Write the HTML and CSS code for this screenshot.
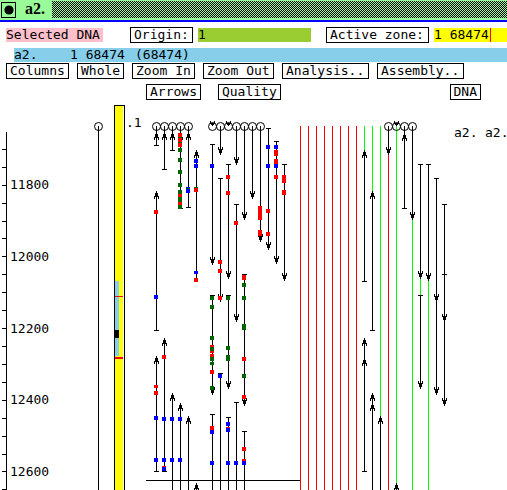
FILE: index.html
```html
<!DOCTYPE html>
<html lang="en">
<head>
<meta charset="utf-8">
<title>a2.</title>
<link rel="stylesheet" href="styles.css">
</head>
<body>
<header class="titlebar">
  <button class="window-menu" aria-label="Window menu"><svg width="14" height="14" viewBox="0 0 14 14"><circle cx="7" cy="7" r="4.6"/></svg></button>
  <h1>a2.</h1>
  <div class="stipple"></div>
</header>
<main>
  <div class="row fields">
    <span class="selected">Selected DNA</span>
    <label class="box" for="origin">Origin:</label>
    <input class="origin" id="origin" value="1">
    <label class="box zone-label" for="zone">Active zone:</label>
    <div class="zone"><input id="zone" value="1 68474"><span class="caret"></span></div>
  </div>
  <div class="summary"><span class="name">a2.</span><span class="range">1 68474</span><span>(68474)</span></div>
  <nav class="menu">
    <button class="box">Columns</button>
    <button class="box">Whole</button>
    <button class="box">Zoom In</button>
    <button class="box">Zoom Out</button>
    <button class="box">Analysis..</button>
    <button class="box">Assembly..</button>
  </nav>
  <div class="headings">
    <button class="box">Arrows</button>
    <button class="box">Quality</button>
    <button class="box dna">DNA</button>
  </div>
  <svg class="map" id="map" width="507" height="387" viewBox="0 103 507 387" role="img" aria-label="Sequence map"></svg>
</main>
<script src="map.js"></script>
</body>
</html>
```
FILE: styles.css
```css
* { box-sizing: border-box; }

body {
  margin: 0;
  background: #fff;
  color: #000;
  font: 13px/14px "DejaVu Sans Mono", monospace;
  overflow: hidden;
}

button, input { font: inherit; color: inherit; }

.titlebar {
  display: flex;
  height: 22px;
  padding: 1px 0;
  background: #98fb98;
  border-bottom: 2px solid #00f;
}

.window-menu {
  display: grid;
  place-items: center;
  width: 15px;
  height: 16px;
  margin: 1px 9px 0 1px;
  padding: 0;
  border: 1px solid #000;
  background: #98fb98;
}

.window-menu svg { display: block; }

h1 {
  width: 27px;
  margin: 0;
  font: bold 16px/16px "Liberation Serif", serif;
}

.stipple {
  flex: 1;
  height: 17px;
  background: repeating-conic-gradient(#98fb98 0 25%, #000 0 50%) 0 0 / 2px 2px;
}

.row { display: flex; align-items: center; }

.fields { height: 26px; padding: 0 0 0 6px; }

.box {
  height: 16px;
  padding: 0 3px;
  border: 1px solid #000;
  background: #fff;
  line-height: 14px;
  text-align: left;
  white-space: nowrap;
}

.selected { width: 97px; margin-right: 27px; background: #ffc0cb; }

.fields .box { width: 63px; margin-right: 5px; }

.origin {
  width: 113px;
  height: 14px;
  margin-right: 15px;
  padding: 0;
  border: 0;
  background: #9acd32;
}

.fields .zone-label { width: 103px; }

.zone { display: flex; flex: 1; height: 14px; background: #ff0; }

.zone input {
  width: 56px;
  height: 14px;
  padding: 0;
  border: 0;
  background: transparent;
}

.caret { width: 1px; background: #f00; }

.summary {
  display: flex;
  margin-left: 14px;
  background: #87ceeb;
}

.name { width: 56px; }

.range { width: 65px; }

.menu {
  display: grid;
  grid-template-columns: 63px 47px 63px 71px 87px 87px;
  gap: 8px;
  padding: 1px 0 0 6px;
}

.headings {
  display: flex;
  gap: 17px;
  padding: 5px 26px 3px 146px;
}

.dna { margin-left: auto; }

.map { display: block; shape-rendering: crispEdges; }

.map circle { shape-rendering: geometricPrecision; }

.map text { font-size: 13px; }
```
FILE: map.js
```js
const svg = document.getElementById('map');
const BOTTOM = 490;
const RED = '#f00', GREEN = '#0f0', BLUE = '#00f', DARK = '#006400';

function add(tag, attrs, text) {
  const el = document.createElementNS('http://www.w3.org/2000/svg', tag);
  for (const key in attrs) el.setAttribute(key, attrs[key]);
  if (text) el.textContent = text;
  svg.append(el);
}
const rect = (x, y, width, height, fill = '#000') => add('rect', { x, y, width, height, fill });
const line = (x, y1, y2, fill) => rect(x, y1, 1, y2 - y1, fill);
const bar = (x, y) => rect(x - 2, y, 5, 1);
const ring = x => add('circle', { cx: x + 0.5, cy: 126.5, r: 4, fill: 'none', stroke: '#000' });
function up(x, y) {
  rect(x, y, 1, 8);
  rect(x - 1, y + 2, 3, 4);
  rect(x - 2, y + 5, 1, 3);
  rect(x + 2, y + 5, 1, 3);
}
function down(x, y) {
  rect(x, y - 7, 1, 8);
  rect(x - 1, y - 5, 3, 4);
  rect(x - 2, y - 7, 1, 3);
  rect(x + 2, y - 7, 1, 3);
}
function clipped(x) {
  ring(x);
  rect(x, 123, 1, 3);
  rect(x - 1, 123, 1, 2);
  rect(x + 1, 123, 1, 2);
  rect(x - 2, 121, 1, 3);
  rect(x + 2, 121, 1, 3);
}

// scale
line(6, 132, BOTTOM);
[149, 167, 185, 203, 221, 238, 256, 274, 292, 310, 328, 346, 364, 382, 400, 418, 436, 454, 471, 489]
  .forEach(y => rect(2, y, 4, 1));
[[11800, 189], [12000, 261], [12200, 333], [12400, 404], [12600, 476]]
  .forEach(([n, y]) => add('text', { x: 10, y }, String(n)));

// locator
line(98, 126, BOTTOM);
ring(98);
rect(114, 105, 11, 385);
rect(115, 106, 9, 384, '#fff');
rect(115, 106, 8, 384, '#ff0');
rect(115, 281, 4, 75, '#87ceeb');
rect(115, 330, 4, 8);
rect(115, 296, 8, 1, RED);
rect(115, 357, 8, 2, RED);
add('text', { x: 126, y: 127 }, '.1');
add('text', { x: 454, y: 137 }, 'a2.');
add('text', { x: 485, y: 137 }, 'a2.');

// coloured columns
for (let x = 300; x <= 356; x += 8) line(x, 126, BOTTOM, RED);
[[364, 126, 150], [372, 126, 191], [380, 126, 416], [396, 126, 483], [412, 219, BOTTOM], [420, 278, 295], [428, 280, BOTTOM]]
  .forEach(([x, a, b]) => line(x, a, b, GREEN));
line(388, 154, BOTTOM, RED);

[156, 164, 172, 180, 188, 220, 236, 244, 252, 260, 388, 404, 412].forEach(ring);
[212, 228, 396].forEach(clipped);

// matches pointing up: x, tip, end, closing bar
[
  [156, 132, 145, 1], [156, 191, 330, 1], [156, 356, 471, 1],
  [164, 132, 169, 1], [164, 338, 471, 1],
  [172, 132, 150, 1], [172, 393, BOTTOM, 0],
  [180, 132, 208, 1], [180, 403, BOTTOM, 0],
  [188, 132, 207, 1], [188, 416, BOTTOM, 0],
  [196, 150, 281, 0], [196, 483, BOTTOM, 0],
  [364, 150, 281, 1], [364, 338, 471, 1], [364, 358, 471, 1],
  [372, 191, 330, 1], [372, 393, BOTTOM, 0], [372, 403, BOTTOM, 0],
  [380, 416, BOTTOM, 0], [396, 483, BOTTOM, 0], [404, 133, 208, 1]
].forEach(([x, tip, end, closed]) => {
  line(x, tip, end);
  up(x, tip);
  if (closed) bar(x, end);
});
[156, 164, 172, 180, 188, 404].forEach(x => line(x, 126, 134));

// matches pointing down: x, start, tip (a start of 126 comes out of a ring)
[
  [212, 144, 264], [212, 295, 394], [220, 126, 154], [220, 178, 301],
  [228, 164, 278], [228, 295, 388], [236, 126, 164], [236, 204, 321],
  [244, 126, 219], [244, 274, 405], [252, 126, 198], [260, 126, 241],
  [268, 128, 249], [276, 141, 263], [284, 164, 280],
  [388, 126, 154], [412, 126, 219], [420, 164, 278], [420, 295, 388],
  [428, 164, 280], [436, 178, 301], [436, 294, 394], [444, 204, 321], [444, 274, 405]
].forEach(([x, start, tip]) => {
  line(x, start, tip);
  down(x, tip);
  if (start > 126 && !(x === 436 && start === 294)) bar(x, start);
});

// matches running off the bottom
[[212, 414], [220, 373], [228, 417], [236, 402], [244, 431]].forEach(([x, y]) => {
  line(x, y, BOTTOM);
  bar(x, y);
});

// markers: x, top, height, colour
[
  [156, 210, 4, RED], [156, 295, 4, BLUE], [156, 385, 3, RED], [156, 391, 4, RED],
  [156, 416, 4, BLUE], [156, 458, 4, BLUE],
  [164, 355, 4, RED], [164, 417, 4, BLUE], [164, 458, 4, BLUE], [164, 466, 2, RED], [164, 467, 4, BLUE],
  [172, 417, 4, BLUE], [172, 458, 4, BLUE], [180, 417, 4, BLUE], [180, 458, 4, BLUE],
  [180, 133, 4, RED], [180, 137, 1, DARK], [180, 138, 4, RED], [180, 142, 1, DARK], [180, 143, 4, RED],
  [180, 148, 4, DARK], [180, 158, 4, DARK], [180, 170, 4, DARK], [180, 183, 4, DARK], [180, 190, 4, DARK],
  [180, 194, 3, RED], [180, 197, 5, DARK], [180, 202, 3, RED], [180, 205, 4, DARK],
  [188, 187, 2, BLUE], [188, 188, 1, DARK], [188, 189, 4, BLUE],
  [196, 159, 4, BLUE], [196, 164, 4, BLUE], [196, 187, 1, DARK], [196, 188, 4, RED],
  [196, 271, 3, BLUE], [196, 278, 4, RED],
  [212, 164, 4, BLUE], [212, 296, 4, DARK], [212, 305, 4, DARK], [212, 336, 4, DARK],
  [212, 345, 2, RED], [212, 347, 4, DARK], [212, 351, 2, RED], [212, 354, 3, RED], [212, 357, 4, DARK],
  [212, 362, 3, DARK], [212, 370, 4, RED], [212, 386, 4, DARK],
  [212, 426, 4, RED], [212, 430, 4, BLUE], [212, 461, 4, BLUE],
  [220, 260, 4, RED], [220, 269, 4, RED], [220, 296, 4, RED], [220, 374, 4, BLUE],
  [228, 175, 4, RED], [228, 191, 4, RED], [228, 296, 4, DARK], [228, 346, 4, DARK], [228, 355, 6, DARK],
  [228, 422, 4, BLUE], [228, 427, 1, RED], [228, 428, 4, BLUE], [228, 461, 4, BLUE],
  [236, 221, 4, RED], [236, 461, 4, BLUE],
  [244, 275, 5, RED], [244, 283, 4, DARK], [244, 296, 4, DARK], [244, 324, 6, DARK], [244, 357, 4, RED],
  [244, 374, 4, DARK], [244, 395, 4, RED], [244, 447, 4, RED], [244, 459, 2, RED], [244, 461, 4, BLUE],
  [260, 206, 14, RED], [260, 230, 6, RED],
  [268, 145, 4, BLUE], [268, 164, 4, BLUE], [268, 209, 4, RED], [268, 232, 4, RED],
  [276, 145, 4, BLUE], [276, 150, 6, RED], [276, 159, 5, RED], [276, 164, 4, BLUE], [276, 175, 4, RED],
  [284, 175, 8, RED], [284, 190, 5, RED]
].forEach(([x, y, h, fill]) => rect(x - 2, y, 4, h, fill));

rect(146, 480, 154, 1);
```
